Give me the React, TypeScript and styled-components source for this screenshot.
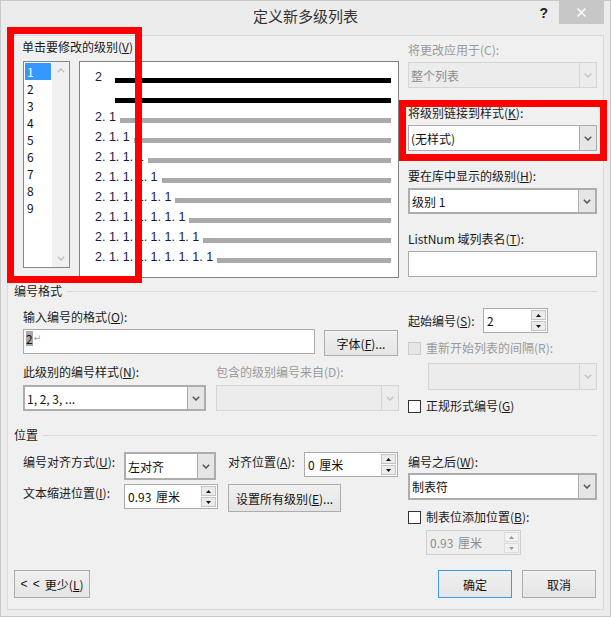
import React from "react";
import styled, { createGlobalStyle, css } from "styled-components";

const GlobalStyle = createGlobalStyle`
  html, body { margin: 0; padding: 0; background: #efefef; }
  body {
    font-family: "Noto Sans CJK SC", "Liberation Sans", sans-serif;
    font-size: 12px;
    color: #1a1a1a;
  }
  *, *::before, *::after { box-sizing: border-box; }
`;

const Window = styled.div`
  position: relative;
  width: 611px;
  height: 617px;
  background: #ececec;
  border: 1px solid #c8c8c8;
  display: flex;
  flex-direction: column;
  overflow: hidden;
`;

const TitleBar = styled.div`
  height: 34px;
  flex: none;
  display: grid;
  grid-template-columns: 1fr auto 1fr;
`;

const Title = styled.div`
  grid-column: 2;
  font-size: 15px;
  line-height: 29px;
  color: #333;
`;

const TitleControls = styled.div`
  grid-column: 3;
  justify-self: end;
  display: flex;
  align-items: flex-start;
  padding-right: 6px;
`;

const HelpButton = styled.div`
  font-family: "Liberation Sans", sans-serif;
  font-weight: bold;
  font-size: 14px;
  line-height: 24px;
  color: #222;
  margin-right: 11px;
`;

const CloseButton = styled.div`
  width: 45px;
  height: 23px;
  background: #c7c7c7;
  display: flex;
  align-items: center;
  justify-content: center;
`;

const Panel = styled.div`
  flex: 1;
  margin: 0 6px 6px 6px;
  background: #f0f0f0;
  border: 1px solid #d9d9d9;
  padding: 0 6px 11px 6px;
  display: flex;
  flex-direction: column;
`;

const Columns = styled.div<{ $top?: number }>`
  display: flex;
  gap: 9px;
  padding-left: 9px;
  margin-top: ${(p) => p.$top ?? 0}px;
  align-items: flex-start;
`;

const LeftCol = styled.div`
  width: 376px;
  flex: none;
  display: flex;
  flex-direction: column;
`;

const RightCol = styled.div<{ $pt?: number }>`
  width: 189px;
  flex: none;
  display: flex;
  flex-direction: column;
  padding-top: ${(p) => p.$pt ?? 0}px;
`;

const Label = styled.div<{ $disabled?: boolean; $mt?: number; $pt?: number; $ml?: number; $w?: number }>`
  height: ${(p) => 16 + (p.$pt ?? 0)}px;
  line-height: 16px;
  white-space: nowrap;
  padding-top: ${(p) => p.$pt ?? 0}px;
  margin-top: ${(p) => p.$mt ?? 0}px;
  margin-left: ${(p) => p.$ml ?? 0}px;
  ${(p) => p.$w && css`width: ${p.$w}px; flex: none;`}
  color: ${(p) => (p.$disabled ? "#9a9a9a" : "#1a1a1a")};
`;

const Mn = styled.span`
  text-decoration: underline;
  text-underline-offset: 1px;
`;

const Field = styled.div<{ $gap?: number; $mt?: number; $ml?: number }>`
  display: flex;
  flex-direction: column;
  gap: ${(p) => p.$gap ?? 4}px;
  margin-top: ${(p) => p.$mt ?? 0}px;
  margin-left: ${(p) => p.$ml ?? 0}px;
`;

/* level list */
const LevelRow = styled.div`
  display: flex;
  gap: 9px;
  margin-top: 6px;
  align-items: flex-start;
`;

const LevelList = styled.div`
  width: 47px;
  height: 207px;
  border: 1px solid #828790;
  background: #fff;
  display: flex;
`;

const LevelItems = styled.div`
  width: 28px;
  padding: 1px 1px 0 1px;
  display: flex;
  flex-direction: column;
`;

const LevelItem = styled.div<{ $selected?: boolean }>`
  height: 17px;
  line-height: 17px;
  padding-left: 2px;
  font-size: 12px;
  background: ${(p) => (p.$selected ? "#3399ff" : "transparent")};
  color: ${(p) => (p.$selected ? "#fff" : "#111")};
`;

const ScrollTrack = styled.div`
  width: 17px;
  background: #f0f0f0;
  display: flex;
  flex-direction: column;
  justify-content: space-between;
`;

const ScrollArrow = styled.div`
  height: 17px;
  display: flex;
  align-items: center;
  justify-content: center;
`;

const Preview = styled.div`
  width: 320px;
  height: 217px;
  border: 1px solid #828282;
  background: #fff;
  padding: 1px 7px 0 15px;
  display: flex;
  flex-direction: column;
`;

const PreviewRow = styled.div`
  height: 20px;
  display: flex;
  align-items: flex-end;
`;

const PreviewNum = styled.span<{ $w?: number }>`
  font-family: "Liberation Sans", Arial, sans-serif;
  font-size: 12.5px;
  line-height: 12px;
  color: #1a1a40;
  white-space: pre;
  ${(p) => p.$w !== undefined && css`width: ${p.$w}px; flex: none;`}
`;

const Bar = styled.div<{ $dark?: boolean }>`
  flex: 1;
  height: 5px;
  margin-left: 4px;
  background: ${(p) => (p.$dark ? "#000" : "#aaaaaa")};
`;

/* combos */
const Combo = styled.div<{ $w?: number; $h?: number; $thick?: boolean; $disabled?: boolean; $mt?: number; $ml?: number }>`
  width: ${(p) => (p.$w ? `${p.$w}px` : "100%")};
  height: ${(p) => p.$h ?? 26}px;
  flex: none;
  display: flex;
  margin-top: ${(p) => p.$mt ?? 0}px;
  margin-left: ${(p) => p.$ml ?? 0}px;
  border: ${(p) => (p.$thick ? "2px solid #adadad" : "1px solid #acacac")};
  background: #fff;
  color: #111;
  ${(p) =>
    p.$disabled &&
    css`
      border: 1px solid #d5d5d5;
      background: #ececec;
      color: #8d8d8d;
    `}
`;

const ComboText = styled.div`
  flex: 1;
  padding-left: 2px;
  display: flex;
  align-items: center;
  white-space: nowrap;
`;

const ComboButton = styled.div<{ $disabled?: boolean }>`
  width: 17px;
  flex: none;
  display: flex;
  align-items: center;
  justify-content: center;
  background: ${(p) => (p.$disabled ? "#ececec" : "#e6e6e6")};
  border-left: 1px solid ${(p) => (p.$disabled ? "#d5d5d5" : "#acacac")};
`;

/* text input */
const TextInput = styled.div<{ $w?: number; $h?: number }>`
  width: ${(p) => (p.$w ? `${p.$w}px` : "100%")};
  height: ${(p) => p.$h ?? 26}px;
  flex: none;
  border: 1px solid #acacac;
  background: #fff;
  display: flex;
  align-items: flex-start;
  padding: 1px 0 0 2px;
`;

const SelectedChar = styled.span`
  background: #a8a8a8;
  line-height: 15px;
  color: #111;
`;

const ParaMark = styled.span`
  font-family: "DejaVu Sans", sans-serif;
  font-size: 9px;
  line-height: 15px;
  color: #9a9a9a;
  margin-left: 1px;
`;

/* spin */
const Spin = styled.div<{ $w: number; $disabled?: boolean; $mt?: number; $ml?: number }>`
  width: ${(p) => p.$w}px;
  height: 25px;
  flex: none;
  display: flex;
  margin-top: ${(p) => p.$mt ?? 0}px;
  margin-left: ${(p) => p.$ml ?? 0}px;
  border: 1px solid ${(p) => (p.$disabled ? "#cfcfcf" : "#acacac")};
  background: ${(p) => (p.$disabled ? "#eeeeee" : "#fff")};
  color: ${(p) => (p.$disabled ? "#8d8d8d" : "#111")};
  padding: 1px;
`;

const SpinText = styled.div`
  flex: 1;
  display: flex;
  align-items: center;
  padding-left: 2px;
  white-space: pre;
  word-spacing: 2px;
`;

const SpinButtons = styled.div`
  width: 15px;
  flex: none;
  display: flex;
  flex-direction: column;
  gap: 1px;
`;

const SpinBtn = styled.div<{ $disabled?: boolean }>`
  flex: 1;
  border: 1px solid ${(p) => (p.$disabled ? "#dcdcdc" : "#c4c4c4")};
  background: ${(p) => (p.$disabled ? "#f2f2f2" : "#ebebeb")};
  display: flex;
  align-items: center;
  justify-content: center;
`;

/* buttons */
const Button = styled.button<{ $w: number; $h?: number; $primary?: boolean; $mt?: number }>`
  width: ${(p) => p.$w}px;
  height: ${(p) => p.$h ?? 28}px;
  flex: none;
  margin: ${(p) => p.$mt ?? 0}px 0 0 0;
  padding: 0;
  font: inherit;
  color: #111;
  display: flex;
  align-items: center;
  justify-content: center;
  white-space: pre;
  border: 1px solid ${(p) => (p.$primary ? "#3c9ae8" : "#acacac")};
  background: linear-gradient(#f0f0f0, #e5e5e5);
`;

const Arrows = styled.span`
  font-family: "Liberation Sans", sans-serif;
  letter-spacing: 1px;
  margin-right: 4px;
`;

/* checkbox */
const CheckRow = styled.div<{ $mt?: number; $disabled?: boolean }>`
  display: flex;
  align-items: center;
  gap: 5px;
  height: 16px;
  margin-top: ${(p) => p.$mt ?? 0}px;
  white-space: nowrap;
  color: ${(p) => (p.$disabled ? "#9a9a9a" : "#1a1a1a")};
`;

const CheckText = styled.span`
  line-height: 16px;
`;

const Box = styled.span<{ $disabled?: boolean }>`
  width: 13px;
  height: 13px;
  flex: none;
  border: 1px solid ${(p) => (p.$disabled ? "#cccccc" : "#333")};
  background: ${(p) => (p.$disabled ? "#e6e6e6" : "#fff")};
`;

/* sections */
const SectionHeader = styled.div<{ $mt?: number }>`
  display: flex;
  align-items: center;
  gap: 5px;
  height: 16px;
  line-height: 16px;
  margin-top: ${(p) => p.$mt ?? 0}px;
  color: #1a1a1a;
`;

const SectionRule = styled.div`
  flex: 1;
  height: 1px;
  background: #dadada;
`;

const FormatRow = styled.div`
  display: flex;
  gap: 9px;
  margin-top: 4px;
  align-items: flex-start;
`;

const StyleGrid = styled.div`
  display: grid;
  grid-template-columns: 183px 183px;
  column-gap: 10px;
  row-gap: 5px;
  margin-top: 8px;
`;

const InlineRow = styled.div<{ $mt?: number }>`
  display: flex;
  align-items: center;
  margin-top: ${(p) => p.$mt ?? 0}px;
`;

const PosGrid = styled.div`
  display: grid;
  grid-template-columns: 101px 104px 76px 95px;
  grid-template-rows: 28px 28px;
  row-gap: 4px;
  align-items: start;
`;

const WideCell = styled.div`
  grid-column: 3 / 5;
`;

const Footer = styled.div`
  margin-top: auto;
  display: flex;
  justify-content: space-between;
  align-items: flex-end;
`;

const FooterRight = styled.div`
  display: flex;
  gap: 10px;
  margin-right: 1px;
`;

const Highlight = styled.div<{ $x: number; $y: number; $w: number; $h: number }>`
  position: absolute;
  left: ${(p) => p.$x}px;
  top: ${(p) => p.$y}px;
  width: ${(p) => p.$w}px;
  height: ${(p) => p.$h}px;
  border: 7px solid #ff0000;
  pointer-events: none;
`;

/* icons */
const Chevron = ({ color = "#555" }: { color?: string }) => (
  <svg width="8" height="5" viewBox="0 0 8 5">
    <path d="M0.8 0.8 L4 4 L7.2 0.8" fill="none" stroke={color} strokeWidth="1.5" />
  </svg>
);

const UpChevron = ({ color = "#c2c2c2" }: { color?: string }) => (
  <svg width="8" height="5" viewBox="0 0 8 5">
    <path d="M0.8 4.2 L4 1 L7.2 4.2" fill="none" stroke={color} strokeWidth="1.4" />
  </svg>
);

const Tri = ({ up, color = "#111" }: { up?: boolean; color?: string }) => (
  <svg width="5" height="3" viewBox="0 0 5 3">
    <path d={up ? "M0 3 L2.5 0 L5 3Z" : "M0 0 L2.5 3 L5 0Z"} fill={color} />
  </svg>
);

const CloseIcon = () => (
  <svg width="9" height="9" viewBox="0 0 9 9">
    <path d="M0.5 0.5 L8.5 8.5 M8.5 0.5 L0.5 8.5" stroke="#fff" strokeWidth="1.5" />
  </svg>
);

type ComboProps = {
  text?: string;
  w?: number;
  h?: number;
  thick?: boolean;
  disabled?: boolean;
  mt?: number;
  ml?: number;
};

const ComboBox = ({ text = "", w, h, thick, disabled, mt, ml }: ComboProps) => (
  <Combo $w={w} $h={h} $thick={thick} $disabled={disabled} $mt={mt} $ml={ml}>
    <ComboText>{text}</ComboText>
    <ComboButton $disabled={disabled}>
      <Chevron color={disabled ? "#c4c4c4" : "#555"} />
    </ComboButton>
  </Combo>
);

type SpinProps = { text: string; w: number; disabled?: boolean; mt?: number; ml?: number };

const SpinBox = ({ text, w, disabled, mt, ml }: SpinProps) => (
  <Spin $w={w} $disabled={disabled} $mt={mt} $ml={ml}>
    <SpinText>{text}</SpinText>
    <SpinButtons>
      <SpinBtn $disabled={disabled}>
        <Tri up color={disabled ? "#9a9a9a" : "#111"} />
      </SpinBtn>
      <SpinBtn $disabled={disabled}>
        <Tri color={disabled ? "#9a9a9a" : "#111"} />
      </SpinBtn>
    </SpinButtons>
  </Spin>
);

const levels = [1, 2, 3, 4, 5, 6, 7, 8, 9];
const previewRows = Array.from({ length: 8 }, (_, i) => "2" + ". 1".repeat(i + 1));

export default function App() {
  return (
    <>
      <GlobalStyle />
      <Window>
        <TitleBar>
          <Title>定义新多级列表</Title>
          <TitleControls>
            <HelpButton>?</HelpButton>
            <CloseButton>
              <CloseIcon />
            </CloseButton>
          </TitleControls>
        </TitleBar>

        <Panel>
          {/* top area */}
          <Columns $top={3}>
            <LeftCol>
              <Label $ml={-1}>
                单击要修改的级别(<Mn>V</Mn>)
              </Label>
              <LevelRow>
                <LevelList>
                  <LevelItems>
                    {levels.map((l) => (
                      <LevelItem key={l} $selected={l === 1}>
                        {l}
                      </LevelItem>
                    ))}
                  </LevelItems>
                  <ScrollTrack>
                    <ScrollArrow>
                      <UpChevron />
                    </ScrollArrow>
                    <ScrollArrow>
                      <Chevron color="#c2c2c2" />
                    </ScrollArrow>
                  </ScrollTrack>
                </LevelList>
                <Preview>
                  <PreviewRow>
                    <PreviewNum $w={16}>2</PreviewNum>
                    <Bar $dark />
                  </PreviewRow>
                  <PreviewRow>
                    <PreviewNum $w={16} />
                    <Bar $dark />
                  </PreviewRow>
                  {previewRows.map((r) => (
                    <PreviewRow key={r}>
                      <PreviewNum>{r}</PreviewNum>
                      <Bar />
                    </PreviewRow>
                  ))}
                </Preview>
              </LevelRow>
            </LeftCol>

            <RightCol $pt={3}>
              <Field>
                <Label $disabled>将更改应用于(C):</Label>
                <ComboBox text="整个列表" disabled />
              </Field>
              <Field $mt={17}>
                <Label>
                  将级别链接到样式(<Mn>K</Mn>):
                </Label>
                <ComboBox text="(无样式)" />
              </Field>
              <Field $mt={17}>
                <Label>
                  要在库中显示的级别(<Mn>H</Mn>):
                </Label>
                <ComboBox text="级别 1" thick />
              </Field>
              <Field $mt={17}>
                <Label>
                  ListNum 域列表名(<Mn>T</Mn>):
                </Label>
                <TextInput />
              </Field>
            </RightCol>
          </Columns>

          {/* number format */}
          <SectionHeader $mt={5}>
            编号格式
            <SectionRule />
          </SectionHeader>
          <Columns>
            <LeftCol>
              <Label $mt={10}>
                输入编号的格式(<Mn>O</Mn>):
              </Label>
              <FormatRow>
                <TextInput $w={292} $h={25}>
                  <SelectedChar>2</SelectedChar>
                  <ParaMark>↵</ParaMark>
                </TextInput>
                <Button $w={74} $h={26} $mt={1}>
                  字体(<Mn>F</Mn>)...
                </Button>
              </FormatRow>
              <StyleGrid>
                <Label>
                  此级别的编号样式(<Mn>N</Mn>):
                </Label>
                <Label $disabled>包含的级别编号来自(D):</Label>
                <ComboBox text="1, 2, 3, ..." thick />
                <ComboBox disabled />
              </StyleGrid>
            </LeftCol>
            <RightCol>
              <InlineRow $mt={9}>
                <Label $w={75}>
                  起始编号(<Mn>S</Mn>):
                </Label>
                <SpinBox text="2" w={65} />
              </InlineRow>
              <CheckRow $mt={7} $disabled>
                <Box $disabled />
                <CheckText>重新开始列表的间隔(R):</CheckText>
              </CheckRow>
              <ComboBox disabled w={169} h={27} mt={7} ml={20} />
              <CheckRow $mt={8}>
                <Box />
                <CheckText>
                  正规形式编号(<Mn>G</Mn>)
                </CheckText>
              </CheckRow>
            </RightCol>
          </Columns>

          {/* position */}
          <SectionHeader $mt={13}>
            位置
            <SectionRule />
          </SectionHeader>
          <Columns $top={9}>
            <LeftCol>
              <PosGrid>
                <Label $pt={2}>
                  编号对齐方式(<Mn>U</Mn>):
                </Label>
                <ComboBox text="左对齐" w={92} h={28} thick />
                <Label $pt={2}>
                  对齐位置(<Mn>A</Mn>):
                </Label>
                <SpinBox text="0 厘米" w={94} />
                <Label $pt={1}>
                  文本缩进位置(<Mn>I</Mn>):
                </Label>
                <SpinBox text="0.93 厘米" w={94} />
                <WideCell>
                  <Button $w={113}>
                    设置所有级别(<Mn>E</Mn>)...
                  </Button>
                </WideCell>
              </PosGrid>
            </LeftCol>
            <RightCol>
              <Field $mt={2} $gap={3}>
                <Label>
                  编号之后(<Mn>W</Mn>):
                </Label>
                <ComboBox text="制表符" h={27} thick />
              </Field>
              <CheckRow $mt={9}>
                <Box />
                <CheckText>
                  制表位添加位置(<Mn>B</Mn>):
                </CheckText>
              </CheckRow>
              <SpinBox text="0.93 厘米" w={95} disabled mt={5} ml={18} />
            </RightCol>
          </Columns>

          <Footer>
            <Button $w={76}>
              <Arrows>&lt; &lt;</Arrows>更少(<Mn>L</Mn>)
            </Button>
            <FooterRight>
              <Button $w={74} $primary>
                确定
              </Button>
              <Button $w={74}>取消</Button>
            </FooterRight>
          </Footer>
        </Panel>

        <Highlight $x={6} $y={26} $w={135} $h={256} />
        <Highlight $x={398} $y={99} $w={208} $h={61} />
      </Window>
    </>
  );
}
